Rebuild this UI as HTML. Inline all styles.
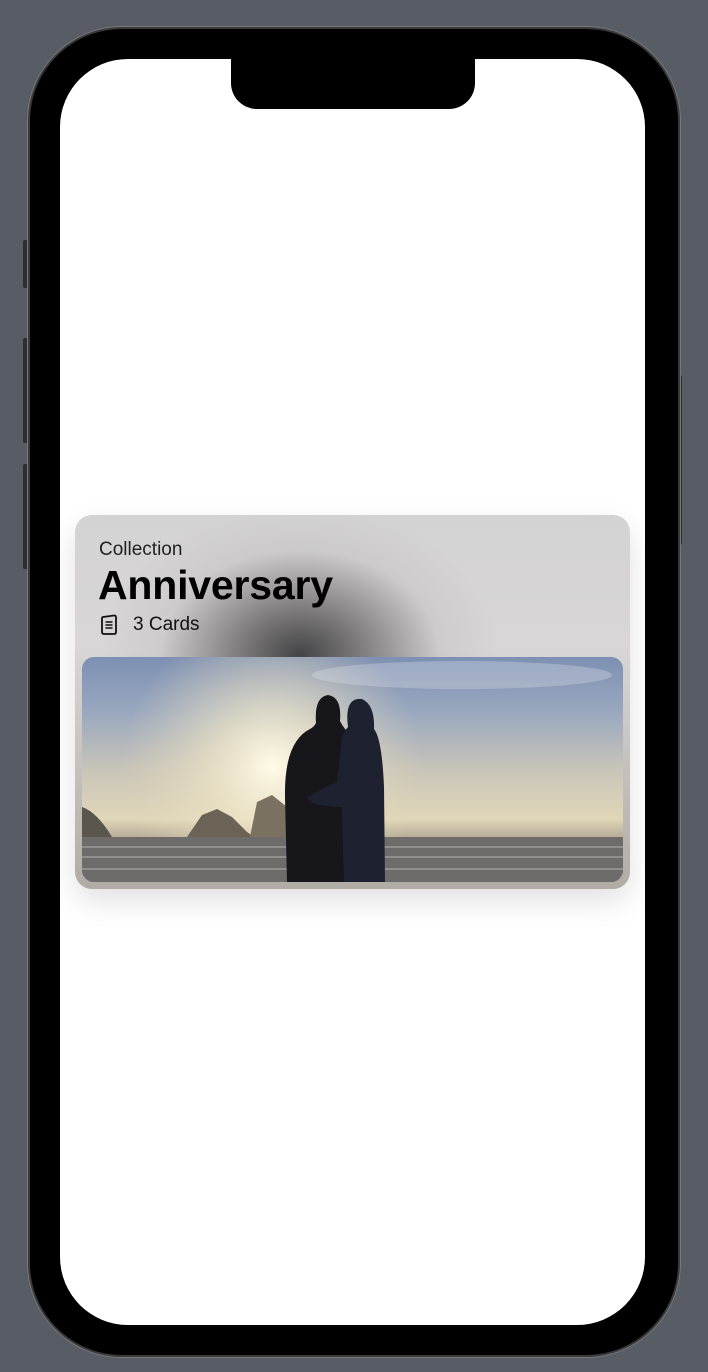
<!DOCTYPE html>
<html><head><meta charset="utf-8"><style>
html,body{margin:0;padding:0;width:708px;height:1372px;background:#585c64;overflow:hidden;font-family:"Liberation Sans",sans-serif}
.btn{position:absolute;background:#2e2e30;border-radius:2px}
.phone{position:absolute;left:30px;top:29px;width:648px;height:1326px;border-radius:92px;background:#000;box-shadow:0 0 0 2px #3a3a3c,0 0 0 3px #77787c}
.screen{position:absolute;left:60px;top:59px;width:585px;height:1266px;border-radius:68px;background:#fff;overflow:hidden}
.notch{position:absolute;left:231px;top:50px;width:244px;height:59px;background:#000;border-radius:0 0 26px 26px}
.card{position:absolute;left:75px;top:515px;width:555px;height:374px;border-radius:17px;overflow:hidden;
background:radial-gradient(ellipse 200px 150px at 225px 140px,#444446 0%,#7d7b7b 30%,rgba(190,188,188,.4) 70%,rgba(210,208,208,0) 100%),linear-gradient(180deg,#d4d3d4 0%,#d8d6d6 35%,#b0aca5 100%);
box-shadow:0 12px 30px rgba(0,0,0,.12)}
.t1{position:absolute;left:24px;top:24px;font-size:19px;color:#222}
.t2{position:absolute;left:23px;top:47px;font-size:41px;font-weight:bold;color:#000;letter-spacing:-.2px}
.t3{position:absolute;left:58px;top:99px;font-size:19px;color:#111}
.img{position:absolute;left:7px;top:142px;width:541px;height:225px;border-radius:12px;overflow:hidden;
background:linear-gradient(180deg,#7d90b3 0%,#9aa8bf 25%,#c8c4b8 50%,#e0d6b8 72%,#b8ad98 80%,#6d6a66 100%)}
</style></head><body>
<div class="btn" style="left:23px;top:240px;width:8px;height:48px"></div>
<div class="btn" style="left:23px;top:338px;width:8px;height:105px"></div>
<div class="btn" style="left:23px;top:464px;width:8px;height:105px"></div>
<div class="btn" style="left:676px;top:375px;width:6px;height:170px"></div>
<div class="phone"></div>
<div class="screen"></div>
<div class="notch"></div>
<div class="card">
<div class="t1">Collection</div>
<div class="t2">Anniversary</div>
<svg style="position:absolute;left:25px;top:99px" width="18" height="22" viewBox="0 0 18 22"><path d="M3 3 L14 1.5 Q16 1.3 16 3.3 L16 18 Q16 20 14 20 L4 20 Q2 20 2 18 L2 4.5 Q2 3.2 3 3Z" fill="none" stroke="#111" stroke-width="1.8"/><path d="M5.5 8h7M5.5 11h7M5.5 14h7" stroke="#111" stroke-width="1.6"/></svg>
<div class="t3">3 Cards</div>
<div class="img">
<svg width="541" height="225" viewBox="0 0 541 225">
<defs><radialGradient id="sun" cx="190" cy="110" r="150" gradientUnits="userSpaceOnUse"><stop offset="0" stop-color="#fffbe8"/><stop offset=".4" stop-color="#f0e6c8" stop-opacity=".7"/><stop offset="1" stop-color="#e0d6b8" stop-opacity="0"/></radialGradient></defs>
<rect width="541" height="225" fill="url(#sun)"/>
<ellipse cx="380" cy="18" rx="150" ry="14" fill="#e4e6ec" opacity=".3"/>
<path d="M0 150 Q15 155 30 180 L0 182Z" fill="#5a554d"/>
<path d="M105 180 L120 158 L135 152 L150 160 L165 175 L172 180Z" fill="#6a6356"/>
<path d="M168 180 L175 145 L190 138 L205 150 L210 180Z" fill="#7a7160"/>
<rect y="180" width="541" height="45" fill="#6e6c6a"/>
<path d="M0 190 H541 M0 200 H541 M0 212 H541" stroke="#a9a7a2" stroke-width="2" opacity=".6"/>
<path d="M205 225 L203 140 Q202 85 228 72 Q232 70 234 66 Q232 40 246 38 Q260 40 258 64 Q262 72 270 80 L270 225Z" fill="#17161a"/>
<path d="M262 225 L260 150 Q230 150 225 140 L255 125 L260 80 Q262 74 266 70 Q262 40 280 42 Q293 48 292 72 Q300 82 302 130 L303 225Z" fill="#1e2230"/>
</svg>
</div>
</div>
</body></html>
